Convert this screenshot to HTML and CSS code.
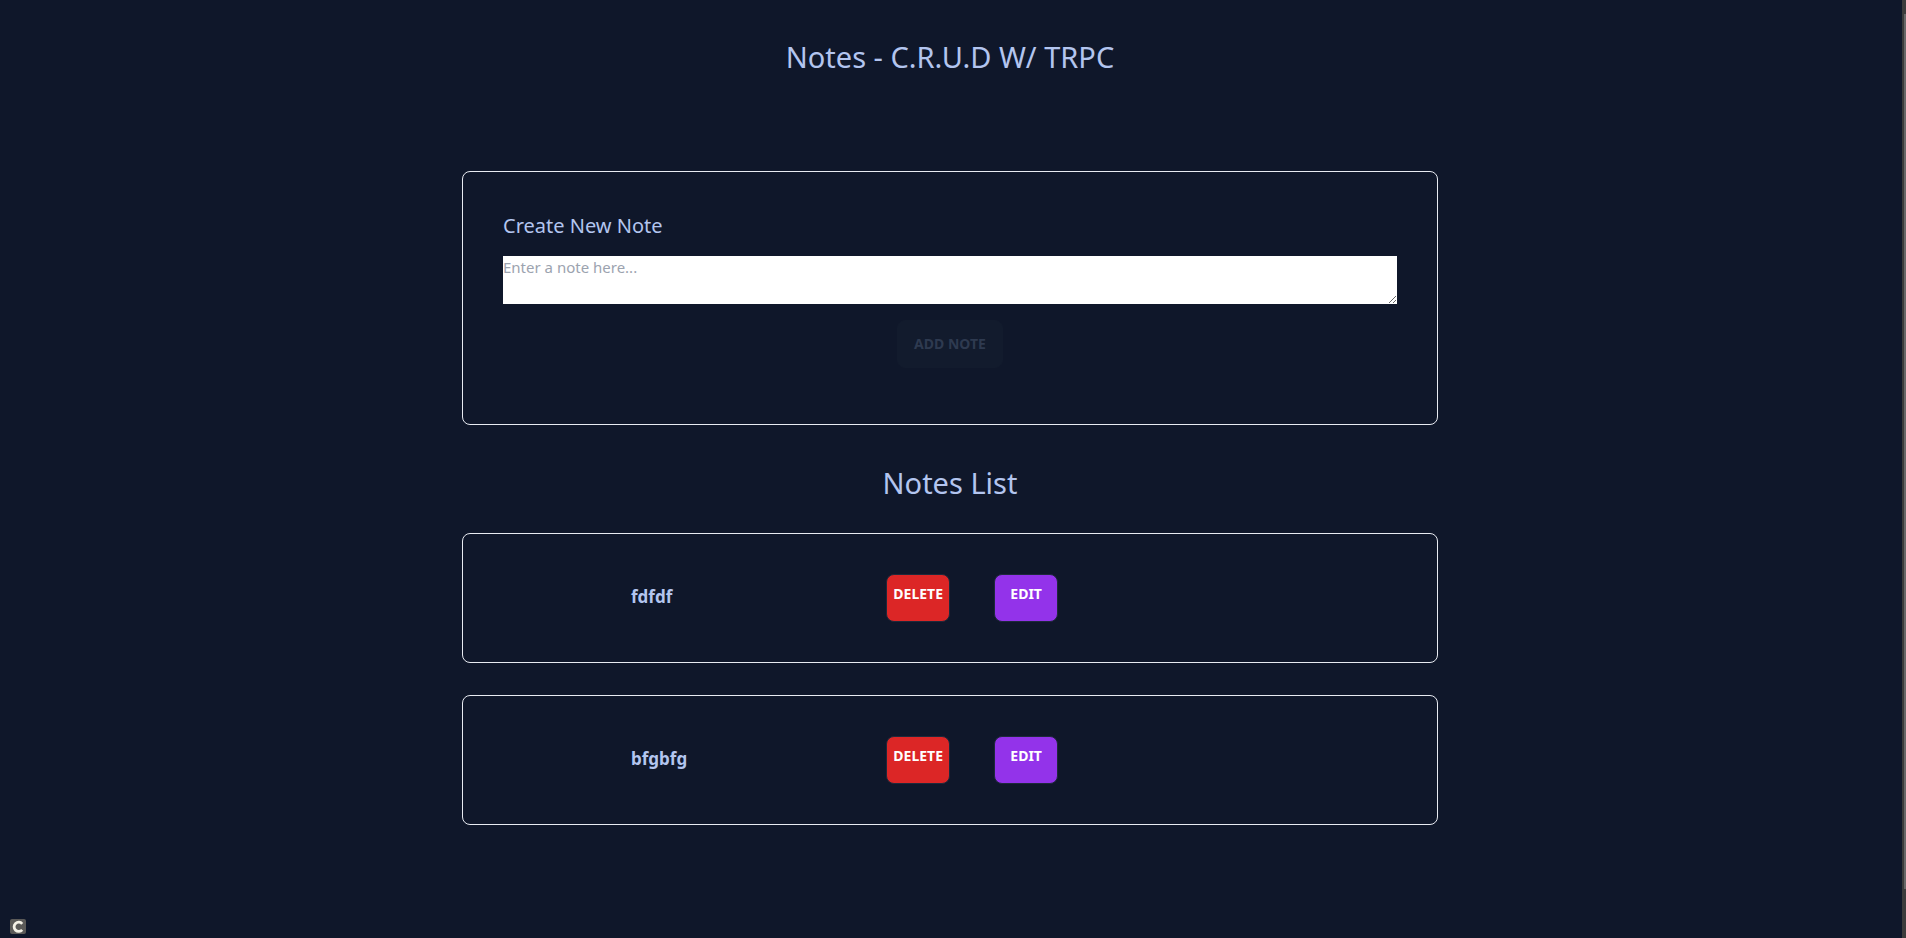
FILE: index.html
```html
<!DOCTYPE html>
<html lang="en">
<head>
<meta charset="utf-8">
<title>Notes - C.R.U.D W/ TRPC</title>
<link rel="stylesheet" href="styles.css">
</head>
<body>
<main class="page">
  <h1 class="title">Notes - C.R.U.D W/ TRPC</h1>
  <form class="card create">
    <label class="create-label" for="note">Create New Note</label>
    <textarea class="create-input" id="note" placeholder="Enter a note here..."></textarea>
    <button class="btn btn-add" type="submit" disabled>Add Note</button>
  </form>
  <h2 class="title list-title">Notes List</h2>
  <ul class="notes">
    <li class="card note">
      <p class="note-text">fdfdf</p>
      <div class="note-actions">
        <button class="btn btn-delete" type="button">Delete</button>
        <button class="btn btn-edit" type="button">Edit</button>
      </div>
    </li>
    <li class="card note">
      <p class="note-text">bfgbfg</p>
      <div class="note-actions">
        <button class="btn btn-delete" type="button">Delete</button>
        <button class="btn btn-edit" type="button">Edit</button>
      </div>
    </li>
  </ul>
</main>
<svg class="badge" viewBox="0 0 16 15" aria-hidden="true">
  <rect width="16" height="15" rx="2" fill="#5b5a58"/>
  <path d="M12.2 4.8A4.6 4.6 0 1 0 12.2 10.8" fill="none" stroke="#f4f1e6" stroke-width="2.8"/>
</svg>
<div class="scrollbar" aria-hidden="true"><div class="scrollbar-thumb"></div></div>
</body>
</html>
```
FILE: styles.css
```css
* {
  box-sizing: border-box;
  margin: 0;
  padding: 0;
}

body {
  min-height: 100vh;
  padding-right: 6px;
  background: #0f172a;
  color: #b3c5ef;
  font-family: "Noto Sans", "Open Sans", sans-serif;
  font-size: 16px;
  line-height: 24px;
}

.page {
  display: flex;
  flex-direction: column;
  width: 100%;
  max-width: 976px;
  margin: 0 auto;
  padding: 39px 0;
}

.title {
  font-size: 29px;
  font-weight: 400;
  line-height: 36px;
  text-align: center;
}

.card {
  border: 1px solid #e8ebf2;
  border-radius: 8px;
  padding: 40px;
}

.create {
  display: flex;
  flex-direction: column;
  margin-top: 96px;
  padding-bottom: 56px;
}

.create-label {
  font-size: 20px;
  line-height: 28px;
}

.create-input {
  width: 100%;
  height: 48px;
  margin: 16px 0;
  border: 0;
  background: #fff;
  color: #111827;
  font: inherit;
  font-size: 15px;
  line-height: 22px;
  resize: vertical;
}

.create-input::placeholder {
  color: #9ca3af;
}

.btn {
  height: 48px;
  border: 1px solid #1e293b;
  border-radius: 8px;
  color: #fff;
  font: inherit;
  font-size: 14px;
  font-weight: 700;
  line-height: 14px;
  text-transform: uppercase;
}

.btn-add {
  align-self: center;
  padding: 0 16px;
  border-color: #121b2d;
  background: #121b2d;
  color: #2e3a50;
}

.list-title {
  margin: 40px 0 32px;
}

.notes {
  display: flex;
  flex-direction: column;
  gap: 32px;
  list-style: none;
}

.note {
  display: grid;
  grid-template-columns: 3fr 4fr;
  align-items: center;
}

.note-text {
  padding: 0 0 2px 128px;
  font-size: 17px;
  font-weight: 700;
  line-height: 28px;
}

.note-actions {
  display: flex;
  gap: 44px;
}

.btn-delete,
.btn-edit {
  width: 64px;
  padding-bottom: 8px;
}

.btn-delete {
  background: #dc2626;
}

.btn-edit {
  background: #9333ea;
}

.badge {
  position: fixed;
  bottom: 4px;
  left: 10px;
  width: 16px;
  height: 15px;
}

.scrollbar {
  position: fixed;
  top: 0;
  right: 0;
  bottom: 0;
  width: 4px;
  padding: 14px 0 49px 2px;
  background: #3c3c3c;
}

.scrollbar-thumb {
  height: 100%;
  background: #686868;
}
```
